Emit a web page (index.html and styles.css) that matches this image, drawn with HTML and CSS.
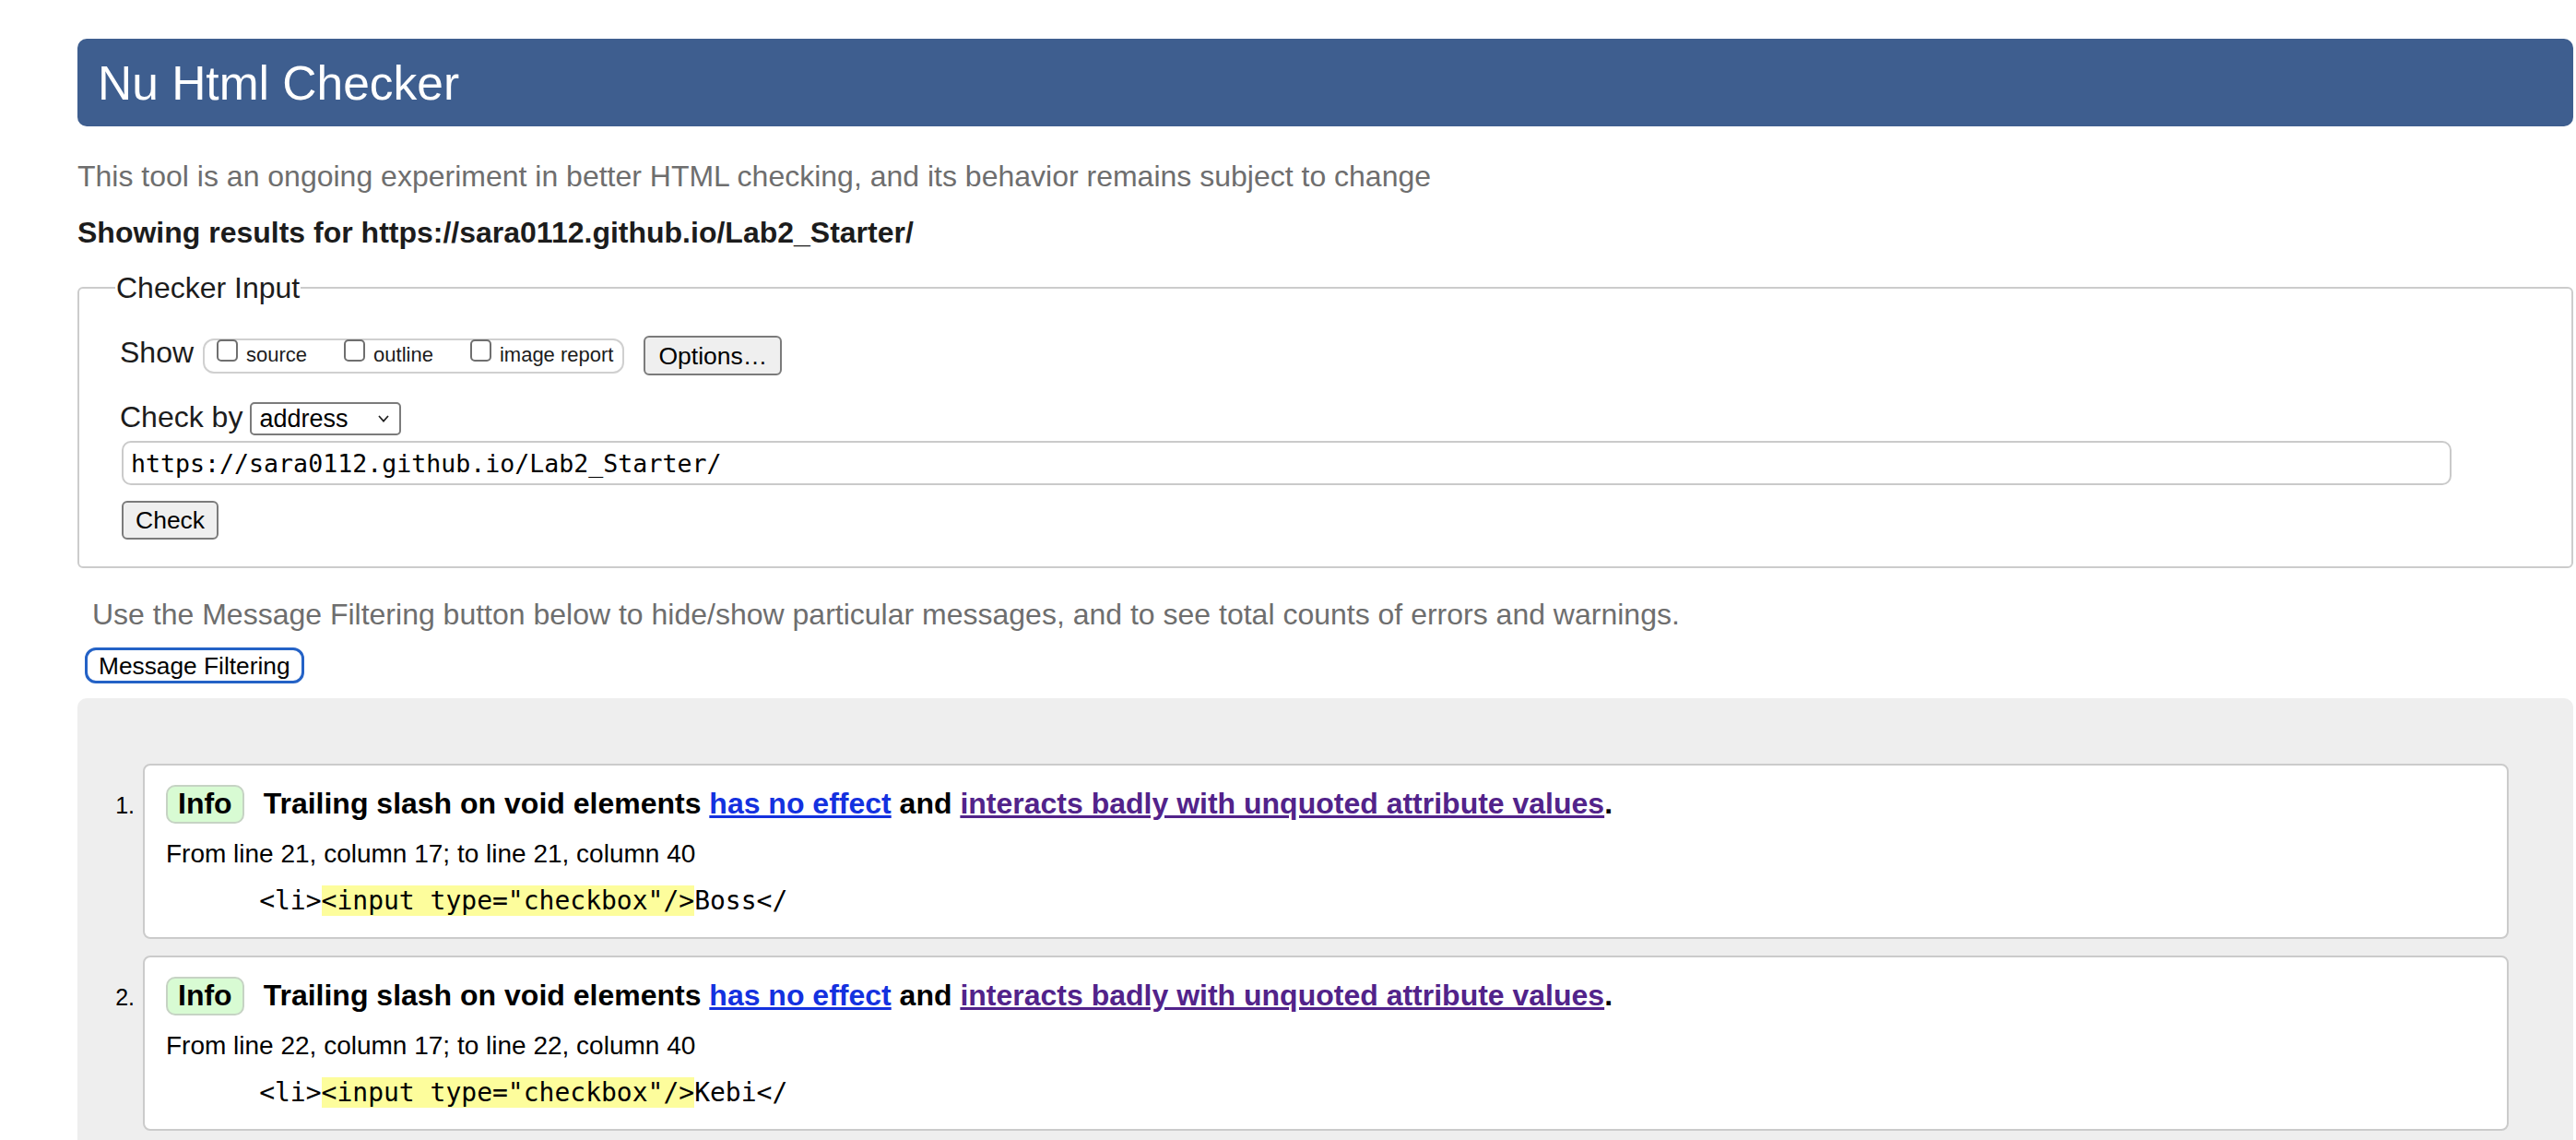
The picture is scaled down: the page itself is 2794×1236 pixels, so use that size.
FILE: index.html
```html
<!DOCTYPE html>
<html lang="en">
<head>
<meta charset="utf-8">
<title>Nu Html Checker</title>
<link rel="stylesheet" href="styles.css">
</head>
<body>
<h1 class="masthead">Nu Html Checker</h1>
<p class="intro">This tool is an ongoing experiment in better HTML checking, and its behavior remains subject to change</p>
<p class="showing">Showing results for https://sara0112.github.io/Lab2_Starter/</p>
<form class="checker">
  <fieldset class="checker-input">
    <legend class="checker-legend">Checker Input</legend>
    <div class="row row-show">
      <span class="row-label">Show</span>
      <span class="show-group">
        <label class="opt"><input type="checkbox" class="cb"><span class="opt-text">source</span></label>
        <label class="opt"><input type="checkbox" class="cb"><span class="opt-text">outline</span></label>
        <label class="opt"><input type="checkbox" class="cb"><span class="opt-text">image report</span></label>
      </span>
      <button type="button" class="btn btn-options">Options…</button>
    </div>
    <div class="row row-by">
      <span class="row-label">Check by</span>
      <span class="select">
        <span class="select-value">address</span>
        <svg class="chev" width="12" height="8" viewBox="0 0 12 8"><polyline points="1,1 6,6.6 11,1" fill="none" stroke="#222" stroke-width="1.7"/></svg>
      </span>
    </div>
    <div class="row row-url">
      <input class="url" type="text" value="https://sara0112.github.io/Lab2_Starter/">
    </div>
    <div class="row row-check">
      <button type="button" class="btn btn-check">Check</button>
    </div>
  </fieldset>
</form>
<p class="hint">Use the Message Filtering button below to hide/show particular messages, and to see total counts of errors and warnings.</p>
<button type="button" class="filter-btn">Message Filtering</button>
<section class="results">
  <ol class="messages">
    <li class="msg">
      <div class="card">
        <p class="msg-head"><span class="badge">Info</span><span class="msg-text">Trailing slash on void elements <a class="lnk" href="#">has no effect</a> and <a class="lnk visited" href="#">interacts badly with unquoted attribute values</a>.</span></p>
        <p class="loc">From line 21, column 17; to line 21, column 40</p>
        <pre class="extract">      &lt;li&gt;<mark class="hl">&lt;input type="checkbox"/&gt;</mark>Boss&lt;/</pre>
      </div>
    </li>
    <li class="msg">
      <div class="card">
        <p class="msg-head"><span class="badge">Info</span><span class="msg-text">Trailing slash on void elements <a class="lnk" href="#">has no effect</a> and <a class="lnk visited" href="#">interacts badly with unquoted attribute values</a>.</span></p>
        <p class="loc">From line 22, column 17; to line 22, column 40</p>
        <pre class="extract">      &lt;li&gt;<mark class="hl">&lt;input type="checkbox"/&gt;</mark>Kebi&lt;/</pre>
      </div>
    </li>
  </ol>
</section>
</body>
</html>
```

FILE: styles.css
```css
*, *::before, *::after { box-sizing: border-box; }

html { background: #fff; }

body {
  margin: 0;
  padding: 42px 3px 60px 84px;
  font-family: "Liberation Sans", Arial, Helvetica, sans-serif;
  color: #1c1c1c;
  background: #fff;
}

.masthead {
  margin: 0;
  height: 95px;
  display: flex;
  align-items: center;
  padding: 0 22px;
  background: #3e5e8f;
  color: #fff;
  border-radius: 10px;
  font-size: 51.5px;
  font-weight: normal;
  line-height: 58px;
}

.intro {
  margin: 36px 0 0;
  font-size: 32px;
  line-height: 36px;
  color: #6e6e6e;
}

.showing {
  margin: 25px 0 0;
  font-size: 32px;
  line-height: 36px;
  font-weight: bold;
  color: #1c1c1c;
}

.checker { margin: 24px 0 0; }

.checker-input {
  margin: 0;
  padding: 34px 44px 29px 44px;
  border: 2px solid #cccccc;
  border-radius: 6px;
  min-width: 0;
}

.checker-legend {
  margin-left: -5px;
  padding: 0 1px;
  font-size: 32px;
  line-height: 36px;
  color: #1c1c1c;
}

.row {
  display: flex;
  align-items: flex-start;
}

.row-label {
  font-size: 32px;
  line-height: 36px;
  color: #1c1c1c;
}

.show-group {
  display: flex;
  align-items: flex-start;
  margin: 3px 0 0 10px;
  height: 38px;
  padding: 0 10px 0 13px;
  border: 2px solid #d0d0d0;
  border-radius: 12px;
}

.opt {
  display: flex;
  align-items: flex-start;
}

.opt + .opt { margin-left: 40px; }

.cb {
  -webkit-appearance: none;
  appearance: none;
  margin: -1px 0 0;
  width: 23px;
  height: 24px;
  border: 2px solid #6f6f6f;
  border-radius: 5px;
  background: #fff;
}

.opt-text {
  margin: 3px 0 0 9px;
  font-size: 22px;
  line-height: 26px;
  color: #1c1c1c;
}

.btn {
  font-family: "Liberation Sans", Arial, Helvetica, sans-serif;
  font-size: 26.5px;
  color: #000;
  background: #efefef;
  border: 2px solid #7b7b7b;
  border-radius: 6px;
  padding: 0 13px;
  line-height: 30px;
}

.btn-options {
  margin-left: 21px;
  height: 43px;
  padding: 0 14px;
}

.row-by { margin-top: 27px; }

.select {
  display: flex;
  align-items: center;
  justify-content: space-between;
  margin: 2px 0 0 8px;
  width: 164px;
  height: 36px;
  padding: 0 11px 0 8px;
  border: 2px solid #7b7b7b;
  border-radius: 5px;
  background: #fff;
}

.select-value {
  font-size: 27px;
  line-height: 30px;
  color: #000;
}

.chev { display: block; }

.row-url { margin-top: 6px; }

.url {
  margin: 0 0 0 2px;
  width: calc(100% - 88px);
  height: 48px;
  padding: 0 8px;
  border: 2px solid #cacaca;
  border-radius: 10px;
  font-family: "DejaVu Sans Mono", "Liberation Mono", monospace;
  font-size: 26.6px;
  color: #000;
  background: #fff;
  outline: none;
}

.row-check { margin-top: 17px; }

.btn-check {
  margin-left: 2px;
  height: 42px;
}

.hint {
  margin: 32px 0 0;
  padding-left: 16px;
  font-size: 32px;
  line-height: 36px;
  color: #6e6e6e;
}

.filter-btn {
  display: block;
  margin: 18px 0 0 8px;
  height: 39px;
  padding: 0 12px;
  border: 3px solid #2462c6;
  border-radius: 12px;
  background: #fff;
  color: #000;
  font-family: "Liberation Sans", Arial, Helvetica, sans-serif;
  font-size: 26.3px;
  line-height: 30px;
}

.results {
  margin-top: 16px;
  padding: 71px 70px 80px 40px;
  background: #eeeeee;
  border-radius: 10px;
}

.messages {
  margin: 0;
  padding: 0;
  list-style: none;
  counter-reset: msg;
}

.msg {
  display: flex;
  align-items: flex-start;
  counter-increment: msg;
}

.msg + .msg { margin-top: 18px; }

.msg::before {
  content: counter(msg) ".";
  flex: none;
  width: 31px;
  padding-right: 9px;
  margin-top: 30px;
  text-align: right;
  font-size: 25px;
  line-height: 30px;
  color: #000;
}

.card {
  flex: 1;
  min-width: 0;
  padding: 21px 23px 23px;
  background: #fff;
  border: 2px solid #cbcbcb;
  border-radius: 8px;
}

.msg-head {
  display: flex;
  align-items: baseline;
  margin: 0;
}

.badge {
  flex: none;
  padding: 0 11px 2px;
  font-size: 32px;
  line-height: 36px;
  font-weight: bold;
  color: #000;
  background: #d8fbd3;
  border: 2px solid #c6d3c4;
  border-radius: 10px;
}

.msg-text {
  margin-left: 21px;
  font-size: 32px;
  line-height: 36px;
  font-weight: bold;
  color: #000;
}

.lnk { color: #1431df; }

.lnk.visited { color: #52238a; }

.loc {
  margin: 17px 0 0;
  font-size: 28px;
  line-height: 32px;
  color: #000;
}

.extract {
  margin: 18px 0 0;
  font-family: "DejaVu Sans Mono", "Liberation Mono", monospace;
  font-size: 28px;
  color: #000;
  white-space: pre;
}

.hl {
  background: #fdfd9c;
  color: #000;
}
```
